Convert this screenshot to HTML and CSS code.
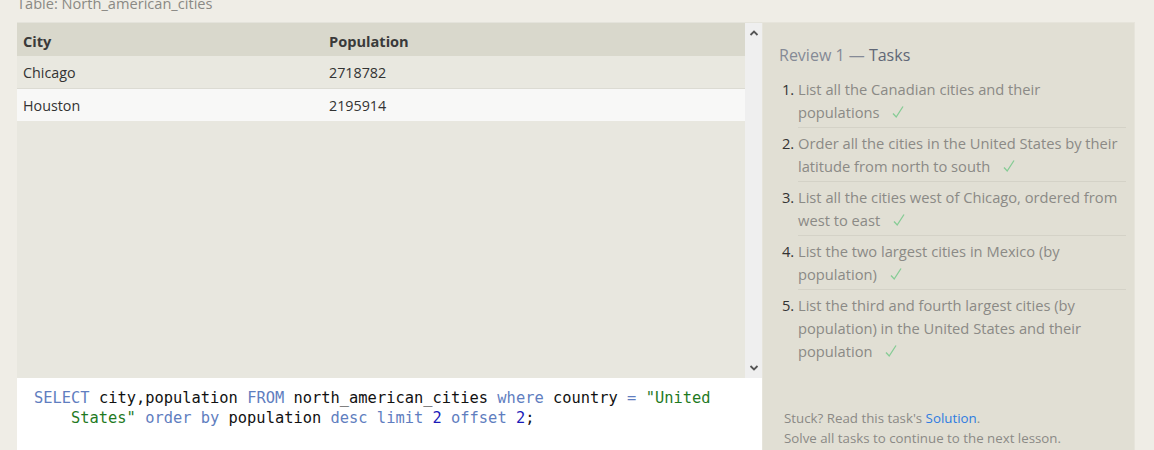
FILE: index.html
```html
<!DOCTYPE html>
<html>
<head>
<meta charset="utf-8">
<link rel="stylesheet" href="styles.css">
</head>
<body>
<div class="page">
  <div class="main">
    <div class="table-title">Table: North_american_cities</div>
    <div class="results">
      <div class="table-wrap">
        <table class="data">
          <thead>
            <tr><th class="c1">City</th><th>Population</th></tr>
          </thead>
          <tbody>
            <tr class="odd"><td>Chicago</td><td>2718782</td></tr>
            <tr class="even"><td>Houston</td><td>2195914</td></tr>
          </tbody>
        </table>
      </div>
      <div class="scrollbar">
        <svg class="arrow" width="10" height="8" viewBox="0 0 10 8"><path d="M1.5 6 L5 2.5 L8.5 6" fill="none" stroke="#555" stroke-width="1.8"/></svg>
        <svg class="arrow" width="10" height="8" viewBox="0 0 10 8"><path d="M1.5 2 L5 5.5 L8.5 2" fill="none" stroke="#555" stroke-width="1.8"/></svg>
      </div>
    </div>
    <div class="editor">
      <div class="code-line"><span class="kw">SELECT</span> city,population <span class="kw">FROM</span> north_american_cities <span class="kw">where</span> country <span class="kw">=</span> <span class="str">"United</span></div>
      <div class="code-line cont"><span class="str">States"</span> <span class="kw">order by</span> population <span class="kw">desc</span> <span class="kw">limit</span> <span class="num">2</span> <span class="kw">offset</span> <span class="num">2</span>;</div>
    </div>
  </div>
  <div class="side">
    <h2 class="side-title"><span class="lesson">Review 1 — </span><span class="tasks">Tasks</span></h2>
    <ol class="task-list">
      <li>List all the Canadian cities and their populations<svg class="check" width="12" height="14" viewBox="0 0 12 14"><path d="M1 8.5 L4.2 12 L11 1.5" fill="none" stroke="#86cc95" stroke-width="1.3"/></svg></li>
      <li>Order all the cities in the United States by their latitude from north to south<svg class="check" width="12" height="14" viewBox="0 0 12 14"><path d="M1 8.5 L4.2 12 L11 1.5" fill="none" stroke="#86cc95" stroke-width="1.3"/></svg></li>
      <li>List all the cities west of Chicago, ordered from west to east<svg class="check" width="12" height="14" viewBox="0 0 12 14"><path d="M1 8.5 L4.2 12 L11 1.5" fill="none" stroke="#86cc95" stroke-width="1.3"/></svg></li>
      <li>List the two largest cities in Mexico (by population)<svg class="check" width="12" height="14" viewBox="0 0 12 14"><path d="M1 8.5 L4.2 12 L11 1.5" fill="none" stroke="#86cc95" stroke-width="1.3"/></svg></li>
      <li>List the third and fourth largest cities (by population) in the United States and their population<svg class="check" width="12" height="14" viewBox="0 0 12 14"><path d="M1 8.5 L4.2 12 L11 1.5" fill="none" stroke="#86cc95" stroke-width="1.3"/></svg></li>
    </ol>
    <div class="side-footer">
      <div>Stuck? Read this task's <a class="link" href="#">Solution</a>.</div>
      <div>Solve all tasks to continue to the next lesson.</div>
    </div>
  </div>
</div>
</body>
</html>
```

FILE: styles.css
```css
html, body {
  margin: 0;
  padding: 0;
  background: #efede6;
  overflow: hidden;
  height: 450px;
}
body {
  font-family: "Open Sans", "Noto Sans", sans-serif;
  color: #333;
}
.page {
  display: flex;
  padding-left: 17px;
  align-items: flex-start;
}
.main {
  width: 745px;
  display: flex;
  flex-direction: column;
}
.table-title {
  font-size: 14.6px;
  color: #8a8984;
  line-height: 20px;
  margin-top: -7px;
  margin-bottom: 9px;
}
.results {
  height: 355px;
  display: flex;
  background: #e8e7df;
  border-top: 1px solid #e4e3db;
}
.table-wrap {
  flex: 1;
}
.data {
  width: 100%;
  border-collapse: collapse;
  font-size: 14.3px;
}
.data th {
  text-align: left;
  font-weight: 700;
  background: #d9d8cc;
  height: 31px;
  padding: 2px 6px 0;
  color: #3a3a3a;
  font-size: 14.6px;
}
.data th.c1 { width: 294px; }
.data td {
  height: 32px;
  padding: 0 6px;
  color: #333;
}
.data tr.odd td {
  background: #e9e8e0;
  border-bottom: 1px solid #dcdbd3;
}
.data tr.even td {
  background: #f8f8f7;
}
.scrollbar {
  width: 17px;
  background: #efefef;
  display: flex;
  flex-direction: column;
  justify-content: space-between;
  align-items: center;
  padding: 6px 0 6px;
}
.editor {
  background: #fff;
  padding: 10px 17px 20px;
  height: 80px;
  font-family: "DejaVu Sans Mono", "Liberation Mono", monospace;
  font-size: 15.4px;
  line-height: 20px;
  color: #111;
  white-space: nowrap;
}
.code-line.cont { padding-left: 37px; }
.kw { color: #5f7ec0; }
.str { color: #1f7a1f; }
.num { color: #1a1ab8; }
.side {
  width: 373px;
  height: 428px;
  margin-top: 22px;
  background: #e1dfd4;
  border: 1px solid #e6e4db;
  border-bottom: none;
  box-sizing: border-box;
  padding: 20px 8px 2px 16px;
  display: flex;
  flex-direction: column;
}
.side-title {
  margin: 0 0 7px;
  font-size: 16px;
  font-weight: 400;
  line-height: 24px;
}
.lesson { color: #858a96; }
.tasks { color: #606776; }
.task-list {
  margin: 0;
  padding: 0 0 0 19px;
  font-size: 14.7px;
  line-height: 23px;
  color: #8b8a86;
}
.task-list li {
  padding: 4px 6px 3px 0;
  border-bottom: 1px solid #d4d2c7;
}
.task-list li:last-child { border-bottom: none; }
.task-list li::marker { color: #333; }
.check {
  margin-left: 13px;
  vertical-align: -1px;
}
.side-footer {
  margin-top: auto;
  padding-left: 5px;
  font-size: 13.3px;
  line-height: 20px;
  color: #8b8a86;
}
.link { color: #2e7ce0; text-decoration: none; }
```
